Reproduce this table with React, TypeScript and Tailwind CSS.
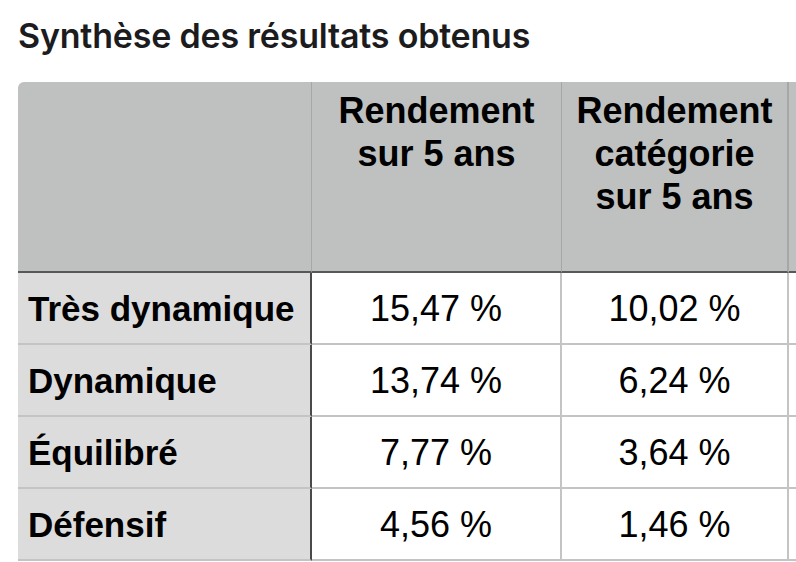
import React from 'react';

const rows = [
  { label: 'Très dynamique', fund: '15,47 %', cat: '10,02 %' },
  { label: 'Dynamique', fund: '13,74 %', cat: '6,24 %' },
  { label: 'Équilibré', fund: '7,77 %', cat: '3,64 %' },
  { label: 'Défensif', fund: '4,56 %', cat: '1,46 %' },
];

export default function App() {
  return (
    <div className="w-[796px] h-[562px] overflow-hidden bg-white">
      <h1
        className="pl-[18px] pt-[15px] text-[34px] leading-[42px] font-semibold text-[#1c1c1e] tracking-[-0.2px]"
        style={{ fontFamily: 'Inter, sans-serif' }}
      >
        Synthèse des résultats obtenus
      </h1>

      <div
        className="ml-[18px] mt-[25px] w-[900px] grid grid-cols-[294px_250px_227px_1fr] text-black text-[36px]"
        style={{ fontFamily: '"Liberation Sans", Arial, sans-serif' }}
      >
        {/* header */}
        <div className="h-[191px] bg-[#bfc1c0] rounded-tl-[6px] border-r border-[#a6a8a7] border-b-2 border-b-[#585858]" />
        <div className="h-[191px] bg-[#bfc1c0] border-r border-[#a6a8a7] border-b-2 border-b-[#585858] pt-[7px] text-center font-bold leading-[43px]">
          Rendement
          <br />
          sur 5 ans
        </div>
        <div className="h-[191px] bg-[#bfc1c0] border-r-2 border-[#a6a8a7] border-b-2 border-b-[#585858] pt-[7px] text-center font-bold leading-[43px]">
          Rendement
          <br />
          catégorie
          <br />
          sur 5 ans
        </div>
        <div className="h-[191px] bg-[#bfc1c0] border-b-2 border-b-[#585858]" />

        {rows.map((r) => (
          <React.Fragment key={r.label}>
            <div className="h-[72px] bg-[#dcdcdc] border-r-2 border-r-[#4a4a4a] border-b-2 border-b-[#c4c4c4] pl-[10px] pt-[2px] flex items-center font-bold text-[35px]">
              {r.label}
            </div>
            <div className="h-[72px] border-r-2 border-r-[#c4c4c4] border-b-2 border-b-[#c4c4c4] pt-[2px] flex items-center justify-center">
              {r.fund}
            </div>
            <div className="h-[72px] border-r-2 border-r-[#c4c4c4] border-b-2 border-b-[#c4c4c4] pt-[2px] flex items-center justify-center">
              {r.cat}
            </div>
            <div className="h-[72px] border-b-2 border-b-[#c4c4c4]" />
          </React.Fragment>
        ))}
      </div>
    </div>
  );
}
